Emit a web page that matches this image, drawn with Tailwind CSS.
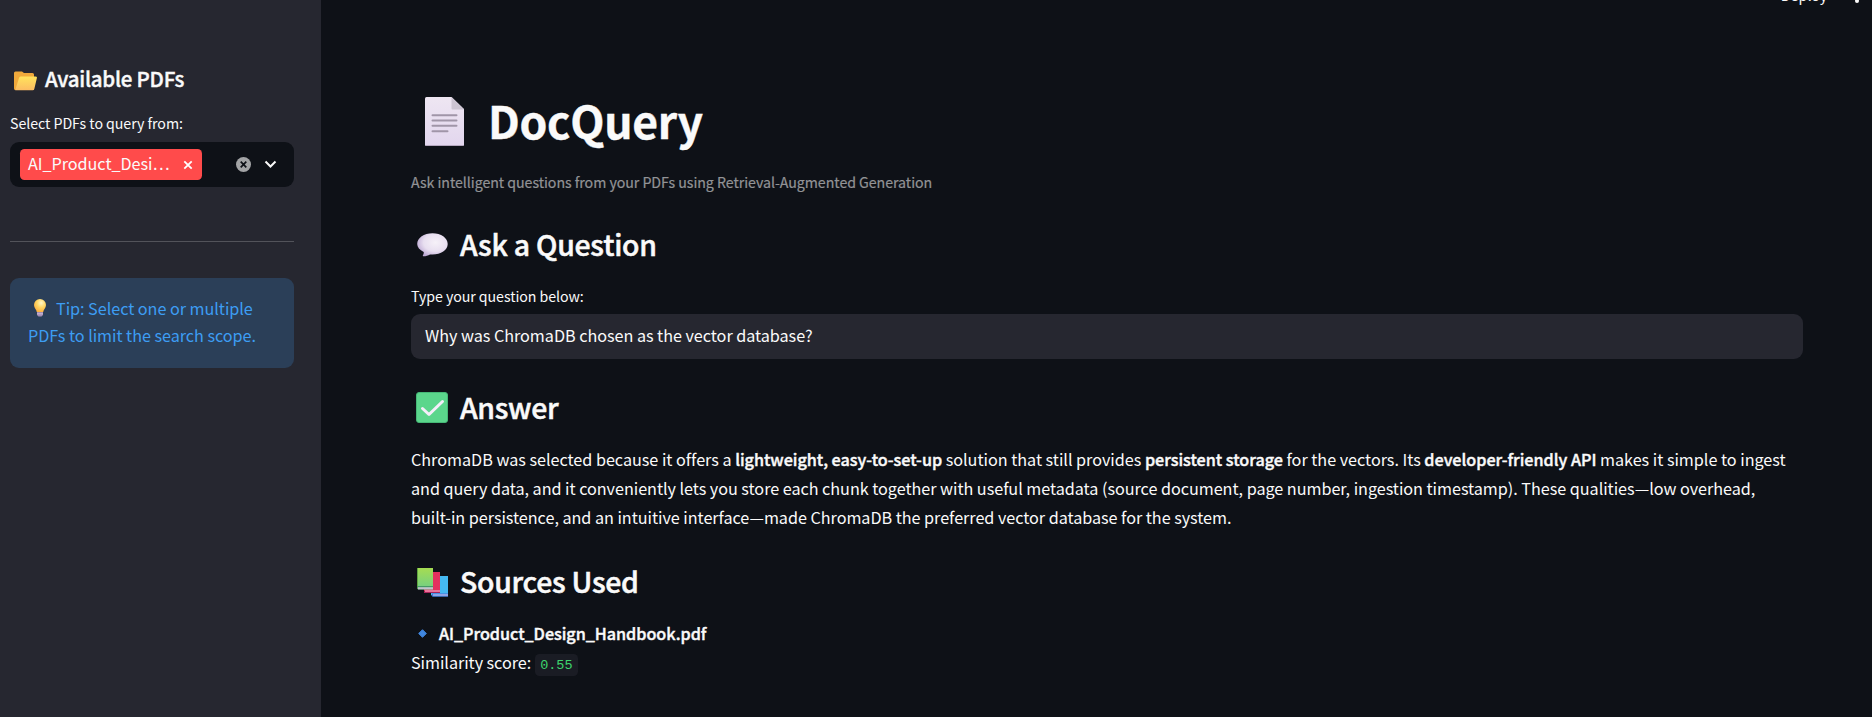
<!DOCTYPE html>
<html lang="en">
<head>
<meta charset="utf-8">
<title>DocQuery</title>
<script src="https://cdn.jsdelivr.net/npm/@tailwindcss/browser@4"></script>
</head>
<body class="h-[717px] overflow-hidden bg-[#0e1117] font-['Noto_Sans_CJK_SC','Noto_Sans',sans-serif] text-[16.2px] tracking-[-0.035px] text-[#fafafa]">
<div class="relative flex h-[717px]">
  <aside class="w-[321px] shrink-0 bg-[#262730] pl-[10px] pr-[27px] pt-[63px]">
    <h2 class="flex h-[30px] items-center text-[20.5px] leading-[30px] font-medium tracking-[-0.25px] [-webkit-text-stroke:0.4px]">
      <svg class="ml-[4px] mr-[8px] mt-[5px] shrink-0" width="23" height="20" viewBox="0 0 23 20">
        <defs><linearGradient id="fo" x1="0" y1="0" x2="0" y2="1"><stop offset="0" stop-color="#ffe35c"/><stop offset="1" stop-color="#fcbc62"/></linearGradient></defs>
        <path d="M0 2Q0 .5 1.500.5H8l2 1.500H18.500Q20 2 20 3.500V19H1.500Q0 19 0 17.500Z" fill="#f0a93b"/>
        <path d="M6.500 5.500H21.500Q23.300 5.500 22.900 7L20.300 18Q20 19.300 18.700 19.300H1.200L5 7Q5.300 5.500 6.500 5.500Z" fill="url(#fo)"/>
      </svg>
      <span class="whitespace-nowrap">Available PDFs</span>
    </h2>
    <div class="mt-[18px] h-6 whitespace-nowrap text-[14.2px] leading-6 tracking-[-0.05px]">Select PDFs to query from:</div>
    <div class="mt-[7px] flex h-[45px] items-center rounded-[9px] bg-[#0e1117] pl-[10px]">
      <div class="flex h-[31px] w-[182px] items-center rounded-[4.5px] bg-[#ff4b4b] pl-[8px]">
        <span class="-mt-[3px] whitespace-nowrap leading-[28px]">AI_Product_Desi…</span>
        <svg class="ml-auto mr-[9px] mt-px" width="10" height="10" viewBox="0 0 10 10" fill="none" stroke="#fff" stroke-width="1.800"><path d="M1.300 1.300 8.700 8.700M8.700 1.300 1.300 8.700"/></svg>
      </div>
      <svg class="ml-[34px]" width="15" height="15" viewBox="0 0 15 15"><circle cx="7.500" cy="7.500" r="7.500" fill="#a3a4a6"/><path d="M4.700 4.700 10.300 10.300M10.300 4.700 4.700 10.300" stroke="#0e1117" stroke-width="1.700"/></svg>
      <svg class="ml-[13px]" width="13" height="9" viewBox="0 0 13 9" fill="none" stroke="#fafafa" stroke-width="2"><path d="M1.500 1.500 6.500 6.500 11.500 1.500"/></svg>
    </div>
    <hr class="mt-[54px] border-t border-[#52535a]">
    <div class="mt-[36px] h-[90px] rounded-[9px] bg-[#2b3f58] pl-[18px] pt-[17px] leading-[27px] tracking-[-0.04px] text-[#3d9df3]">
      <div class="flex">
        <svg class="ml-[6px] mr-[10px] mt-[4px]" width="12" height="18" viewBox="0 0 12 18">
          <defs><radialGradient id="bu" cx=".6" cy=".3" r=".7"><stop offset="0" stop-color="#fff7c8"/><stop offset=".5" stop-color="#ffd764"/><stop offset="1" stop-color="#fbb040"/></radialGradient></defs>
          <path d="M6 0a6 6 0 0 1 6 6c0 3-2.500 4.500-2.800 7H2.800C2.500 10.500 0 9 0 6a6 6 0 0 1 6-6Z" fill="url(#bu)"/>
          <path d="M3 13h6v3L7.500 17.500h-3L3 16Z" fill="#a58fb5"/><path d="M3 14.800h6" stroke="#d9c9e2" stroke-width=".8"/>
        </svg>
        <span class="whitespace-nowrap">Tip: Select one or multiple</span>
      </div>
      <div class="whitespace-nowrap">PDFs to limit the search scope.</div>
    </div>
  </aside>

  <main class="min-w-0 flex-1 pl-[90px] pr-[69px] pt-[90px]">
    <h1 class="flex h-[60px] items-center text-[44.5px] leading-[60px] font-bold tracking-[-0.3px] [-webkit-text-stroke:0.4px]">
      <svg class="ml-[14px] mr-[24px] mt-[3px] shrink-0" width="39" height="49" viewBox="0 0 39 49">
        <defs><linearGradient id="dc" x1="0" y1="0" x2="0" y2="1"><stop offset="0" stop-color="#eee6f2"/><stop offset="1" stop-color="#e2d6ee"/></linearGradient></defs>
        <path d="M1.500 0H26.500L39 12V47.500Q39 49 37.500 49H1.500Q0 49 0 47.500V1.500Q0 0 1.500 0Z" fill="url(#dc)"/>
        <path d="M26.500 0 39 12.500H27.500Q26.500 12.500 26.500 11.500Z" fill="#cdc5d3"/>
        <path d="M.5 48.500H38.500" stroke="#b5a8bf"/>
        <path d="M7.500 18.200H31.500M7.500 23.500H31.500M7.500 28.800H31.500M7.500 34.200H22.500" stroke="#a095a8" stroke-width="2" stroke-linecap="round"/>
      </svg>
      <span class="whitespace-nowrap">DocQuery</span>
    </h1>
    <div class="mt-[20px] h-6 whitespace-nowrap text-[14.2px] leading-6 tracking-[-0.045px] text-[#929396] [-webkit-text-stroke:0.2px]">Ask intelligent questions from your PDFs using Retrieval-Augmented Generation</div>
    <h3 class="mt-[29px] flex h-[42px] items-center text-[28.4px] leading-[42px] font-medium tracking-[-0.23px] [-webkit-text-stroke:0.5px]">
      <svg class="ml-[6px] mr-[12px] mt-[2px] shrink-0" width="31" height="24" viewBox="0 0 31 24">
        <defs><radialGradient id="sp" cx=".6" cy=".4" r=".65"><stop offset="0" stop-color="#f6f1f8"/><stop offset=".6" stop-color="#e8dff0"/><stop offset="1" stop-color="#bda9d4"/></radialGradient></defs>
        <path d="M15.500.3C24 .3 30.700 5 30.700 11S24 21.500 15.500 21.500L13 21.400C11 22.500 8.500 23.400 6.200 23.300 5.500 23.200 5.700 22.500 6.100 22 6.700 21 6.900 19.800 6.700 18.900 2.600 17 .2 14.200.2 11 .2 5 7 .3 15.500.3Z" fill="url(#sp)"/>
      </svg>
      <span class="whitespace-nowrap">Ask a Question</span>
    </h3>
    <div class="mt-[19px] h-6 whitespace-nowrap text-[14.2px] leading-6 tracking-[-0.06px]">Type your question below:</div>
    <div class="mt-[6px] flex h-[45px] items-center rounded-[9px] bg-[#262730] pl-[14px]"><span class="-mt-[2px] whitespace-nowrap leading-[43px]">Why was ChromaDB chosen as the vector database?</span></div>
    <h3 class="mt-[27px] flex h-[42px] items-center text-[28.4px] leading-[42px] font-medium tracking-[-0.3px] [-webkit-text-stroke:0.5px]">
      <svg class="ml-[5px] mr-[12px] mt-px shrink-0" width="32" height="31" viewBox="0 0 32 31">
        <rect x=".5" y=".5" width="31" height="30" rx="2.500" fill="#5bd68c" stroke="#46b877"/>
        <path d="M6.500 16.500 13 22.500 26.500 9.500" fill="none" stroke="#f5eefa" stroke-width="3" stroke-linecap="round" stroke-linejoin="round"/>
      </svg>
      <span class="whitespace-nowrap">Answer</span>
    </h3>
    <div class="mt-[17px] whitespace-nowrap leading-[29px]">
      <span class="tracking-[-0.02px]">ChromaDB was selected because it offers a <b class="font-medium [-webkit-text-stroke:0.4px]">lightweight, easy-to-set-up</b> solution that still provides <b class="font-medium [-webkit-text-stroke:0.4px]">persistent storage</b> for the vectors. Its <b class="font-medium [-webkit-text-stroke:0.4px]">developer-friendly API</b> makes it simple to ingest</span><br>
      and query data, and it conveniently lets you store each chunk together with useful metadata (source document, page number, ingestion timestamp). These qualities—low overhead,<br>
      built-in persistence, and an intuitive interface—made ChromaDB the preferred vector database for the system.
    </div>
    <h3 class="mt-[28px] flex h-[42px] items-center text-[28.4px] leading-[42px] font-medium tracking-[-0.26px] [-webkit-text-stroke:0.5px]">
      <svg class="ml-[6px] mr-[12px] mt-[2px] shrink-0" width="31" height="29" viewBox="0 0 31 29">
        <defs><linearGradient id="bg" x1="0" y1="0" x2="0" y2="1"><stop offset="0" stop-color="#a6dc52"/><stop offset="1" stop-color="#6fcf86"/></linearGradient></defs>
        <path d="M14 8H31V28.500H16L14 27Z" fill="#45b9f2"/><path d="M15 25.500H31V28.500H15Z" fill="#4a6fd8"/><path d="M16 27H31" stroke="#d6dcf6"/>
        <path d="M7 4H23V24.500H8L7 23Z" fill="#e3305f"/><path d="M8 23H23" stroke="#f3b9d8"/><path d="M7 24.500H23" stroke="#a8245c"/>
        <path d="M0 0H16V21.500H1L0 20Z" fill="url(#bg)"/><path d="M.5 0V20" stroke="#5ea53f"/><path d="M0 18.700H16" stroke="#3d8a62"/><path d="M1 20.300H16" stroke="#c3c0cf" stroke-width="2"/>
      </svg>
      <span class="whitespace-nowrap">Sources Used</span>
    </h3>
    <div class="mt-[17px] leading-[29px]">
      <div class="flex items-center">
        <svg class="ml-[7px] mr-[12px]" width="9" height="9" viewBox="0 0 9 9"><path d="M4.500.7 8.300 4.500 4.500 8.300.7 4.500Z" fill="#4087e0" stroke="#4087e0" stroke-linejoin="round"/></svg>
        <b class="whitespace-nowrap font-medium [-webkit-text-stroke:0.4px]">AI_Product_Design_Handbook.pdf</b>
      </div>
      <div class="flex items-center"><span class="whitespace-nowrap tracking-[-0.05px]">Similarity score:</span><code class="ml-[4px] mt-[4px] h-[22px] w-[43px] rounded-[4.5px] bg-[#1a1c24] pl-[5px] font-['Liberation_Mono',monospace] text-[13.5px] leading-[24px] tracking-normal text-[#3dd56d]">0.55</code></div>
    </div>
  </main>
  <div class="absolute right-0 top-[-17px] flex h-6 items-center text-[14.2px] leading-6"><span class="mr-[28px]">Deploy</span><svg class="mr-[13px] mb-[2px]" width="4" height="18" viewBox="0 0 4 18" fill="#fafafa"><circle cx="2" cy="2" r="2"/><circle cx="2" cy="9" r="2"/><circle cx="2" cy="16" r="2"/></svg></div>
</div>
</body>
</html>
